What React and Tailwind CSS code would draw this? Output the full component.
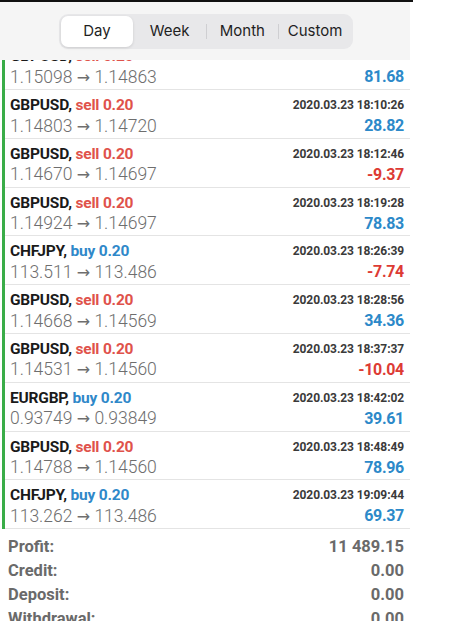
import React from 'react'

const TRADES = [
  { pair: 'GBPUSD', side: 'sell', lot: '0.20', time: '', open: '1.15098', close: '1.14863', profit: '81.68' },
  { pair: 'GBPUSD', side: 'sell', lot: '0.20', time: '2020.03.23 18:10:26', open: '1.14803', close: '1.14720', profit: '28.82' },
  { pair: 'GBPUSD', side: 'sell', lot: '0.20', time: '2020.03.23 18:12:46', open: '1.14670', close: '1.14697', profit: '-9.37' },
  { pair: 'GBPUSD', side: 'sell', lot: '0.20', time: '2020.03.23 18:19:28', open: '1.14924', close: '1.14697', profit: '78.83' },
  { pair: 'CHFJPY', side: 'buy', lot: '0.20', time: '2020.03.23 18:26:39', open: '113.511', close: '113.486', profit: '-7.74' },
  { pair: 'GBPUSD', side: 'sell', lot: '0.20', time: '2020.03.23 18:28:56', open: '1.14668', close: '1.14569', profit: '34.36' },
  { pair: 'GBPUSD', side: 'sell', lot: '0.20', time: '2020.03.23 18:37:37', open: '1.14531', close: '1.14560', profit: '-10.04' },
  { pair: 'EURGBP', side: 'buy', lot: '0.20', time: '2020.03.23 18:42:02', open: '0.93749', close: '0.93849', profit: '39.61' },
  { pair: 'GBPUSD', side: 'sell', lot: '0.20', time: '2020.03.23 18:48:49', open: '1.14788', close: '1.14560', profit: '78.96' },
  { pair: 'CHFJPY', side: 'buy', lot: '0.20', time: '2020.03.23 19:09:44', open: '113.262', close: '113.486', profit: '69.37' },
]

const SUMMARY = [
  { label: 'Profit:', value: '11 489.15' },
  { label: 'Credit:', value: '0.00' },
  { label: 'Deposit:', value: '0.00' },
  { label: 'Withdrawal:', value: '0.00' },
]

const TABS = ['Day', 'Week', 'Month', 'Custom']
const ACTIVE = 0

const bold = "font-['Roboto',sans-serif] font-bold"

function TradeRow({ t }) {
  const neg = t.profit.startsWith('-')
  return (
    <div className="h-[48.8px] shrink-0 border-b border-[#e4e4e4] pl-[5px] pr-[6px] pt-[5px] flex flex-col">
      <div className="flex items-center justify-between h-[20px]">
        <div className={`${bold} text-[15.5px] tracking-[-0.2px] leading-[20px] text-[#1a1a1a]`}>
          {t.pair},{' '}
          <span className={t.side === 'sell' ? 'text-[#df524b]' : 'text-[#2f88c9]'}>
            {t.side} {t.lot}
          </span>
        </div>
        <div className={`${bold} text-[12px] tracking-[-0.1px] text-[#3a3a3a]`}>{t.time}</div>
      </div>
      <div className="flex items-center justify-between h-[20px] mt-[1px]">
        <div className="font-['Roboto',sans-serif] font-light text-[17.5px] leading-[20px] text-[#6e6e6e]">
          {t.open}{' '}
          <span className="font-['DejaVu_Sans',sans-serif] font-normal text-[16px]">→</span>{' '}
          {t.close}
        </div>
        <div className={`${bold} text-[16px] tracking-[-0.3px] ${neg ? 'text-[#dd3b34]' : 'text-[#2c89c9]'}`}>
          {t.profit}
        </div>
      </div>
    </div>
  )
}

export default function App() {
  return (
    <div className="w-[471px] h-[621px] overflow-hidden bg-white flex flex-col">
      {/* top edge */}
      <div className="w-[413px] h-[2px] bg-[#111] shrink-0" />

      {/* period selector */}
      <div className="w-[410px] h-[58px] shrink-0 bg-[#f5f5f5] flex items-center pl-[59px] pt-[1px]">
        <div className="w-[294px] h-[35px] rounded-[9px] bg-[#e8e8ea] p-[2px] flex items-center">
          {TABS.map((tab, i) => (
            <React.Fragment key={tab}>
              {i > 0 && (
                <div
                  className={`w-px h-[15px] shrink-0 ${
                    i === ACTIVE || i - 1 === ACTIVE ? 'bg-transparent' : 'bg-[#cfcfd2]'
                  }`}
                />
              )}
              <div
                className={`flex-1 h-full flex items-center justify-center text-[15px] font-['Inter',sans-serif] text-[#1f1f1f] rounded-[7px] ${
                  i === ACTIVE ? 'bg-white shadow-[0_1px_3px_rgba(0,0,0,0.12)]' : ''
                }`}
              >
                {tab}
              </div>
            </React.Fragment>
          ))}
        </div>
      </div>

      {/* deals list */}
      <div className="w-[410px] h-[469px] shrink-0 overflow-hidden">
        <div className="ml-[2px] border-l-[3px] border-[#3aad48] flex flex-col mt-[-18.8px]">
          {TRADES.map((t, i) => (
            <TradeRow key={i} t={t} />
          ))}
        </div>
      </div>

      {/* summary */}
      <div className="w-[410px] pl-[8px] pr-[6px] pt-[6px] flex flex-col">
        {SUMMARY.map((s) => (
          <div key={s.label} className={`flex justify-between h-[24px] items-center ${bold} text-[16.5px] text-[#6a6a6a]`}>
            <span>{s.label}</span>
            <span>{s.value}</span>
          </div>
        ))}
      </div>
    </div>
  )
}
